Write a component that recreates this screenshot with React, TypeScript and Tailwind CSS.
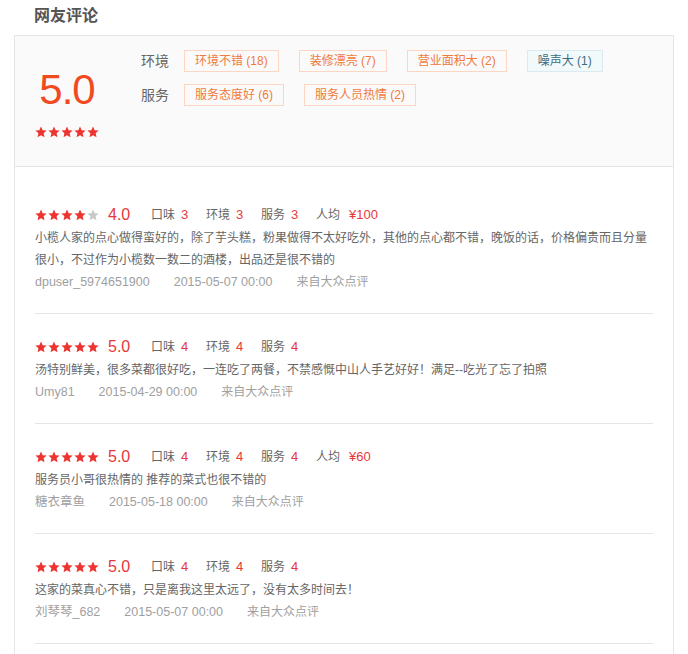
const FONT = "font-['Liberation_Sans','Noto_Sans_CJK_SC',sans-serif]";

type Review = {
    score: number;
    taste: number;
    env: number;
    service: number;
    price?: string;
    text: string;
    user: string;
    time: string;
};

const reviews: Review[] = [
    {
        score: 4,
        taste: 3,
        env: 3,
        service: 3,
        price: '¥100',
        text: '小榄人家的点心做得蛮好的，除了芋头糕，粉果做得不太好吃外，其他的点心都不错，晚饭的话，价格偏贵而且分量很小，不过作为小榄数一数二的酒楼，出品还是很不错的',
        user: 'dpuser_5974651900',
        time: '2015-05-07 00:00',
    },
    {
        score: 5,
        taste: 4,
        env: 4,
        service: 4,
        text: '汤特别鲜美，很多菜都很好吃，一连吃了两餐，不禁感慨中山人手艺好好！满足--吃光了忘了拍照',
        user: 'Umy81',
        time: '2015-04-29 00:00',
    },
    {
        score: 5,
        taste: 4,
        env: 4,
        service: 4,
        price: '¥60',
        text: '服务员小哥很热情的 推荐的菜式也很不错的',
        user: '糖衣章鱼',
        time: '2015-05-18 00:00',
    },
    {
        score: 5,
        taste: 4,
        env: 4,
        service: 4,
        text: '这家的菜真心不错，只是离我这里太远了，没有太多时间去！',
        user: '刘琴琴_682',
        time: '2015-05-07 00:00',
    },
];

const Star = ({ on }: { on: boolean }) => (
    <svg width="12" height="12" viewBox="0 0 24 24" className={on ? 'fill-[#ec3530]' : 'fill-[#c9c9c9]'}>
        <path d="M12 1.2l3.3 7.2 7.9.8-5.9 5.3 1.7 7.8L12 18.3l-6.9 4 1.7-7.8L.8 9.2l7.9-.8z" />
    </svg>
);

const Stars = ({ n }: { n: number }) => (
    <div className="flex gap-px">
        {[0, 1, 2, 3, 4].map(i => <Star key={i} on={i < n} />)}
    </div>
);

const Tag = ({ label, blue }: { label: string; blue?: boolean }) => (
    <span
        className={`h-[22px] px-[10px] flex items-center text-[12px] border ${blue
            ? 'bg-[#f2f9fb] border-[#d9ebf0] text-[#3b6d82]'
            : 'border-[#fbd6c3] text-[#f07a3c]'}`}
    >
        {label}
    </span>
);

const Sub = ({ label, value }: { label: string; value: number }) => (
    <span className="w-[55px] flex items-center">
        <span className="text-[#666]">{label}</span>
        <span className="ml-[6px] text-[13px] text-[#e8373a]">{value}</span>
    </span>
);

export default function App() {
    return (
        <div className={`${FONT} bg-white mx-[14px]`}>
            {/* Title */}
            <div className="h-[35px] pl-5 pb-[3px] flex items-center text-[16px] font-bold text-[#555]">
                网友评论
            </div>

            <div className="border border-[#e5e5e5]">
                {/* Summary */}
                <div className="h-[131px] bg-[#fafafa] border-b border-[#e5e5e5] px-5 flex">
                    <div className="w-[64px] flex flex-col items-center pt-[33px]">
                        <div className="text-[42px] leading-[42px] tracking-[-1px] text-[#f04a1e]">5.0</div>
                        <div className="mt-[15px]">
                            <Stars n={5} />
                        </div>
                    </div>
                    <div className="ml-[42px] pt-[14px] flex flex-col gap-[12px]">
                        <div className="flex items-center">
                            <span className="w-[43px] text-[14px] text-[#666]">环境</span>
                            <div className="flex gap-5">
                                <Tag label="环境不错 (18)" />
                                <Tag label="装修漂亮 (7)" />
                                <Tag label="营业面积大 (2)" />
                                <Tag label="噪声大 (1)" blue />
                            </div>
                        </div>
                        <div className="flex items-center">
                            <span className="w-[43px] text-[14px] text-[#666]">服务</span>
                            <div className="flex gap-5">
                                <Tag label="服务态度好 (6)" />
                                <Tag label="服务人员热情 (2)" />
                            </div>
                        </div>
                    </div>
                </div>

                {/* Reviews */}
                <div className="px-5 pt-[15px] pb-[40px]">
                    {reviews.map((r, i) => (
                        <div key={i} className="pt-5 pb-5 border-b border-[#e5e5e5]">
                            <div className="h-[25px] flex items-center text-[12px]">
                                <Stars n={r.score} />
                                <span className="ml-[9px] w-[43px] text-[16px] text-[#e8373a]">{r.score.toFixed(1)}</span>
                                <Sub label="口味" value={r.taste} />
                                <Sub label="环境" value={r.env} />
                                <Sub label="服务" value={r.service} />
                                {r.price && (
                                    <span className="flex items-center">
                                        <span className="text-[#666]">人均</span>
                                        <span className="ml-[9px] text-[13px] text-[#e8373a]">{r.price}</span>
                                    </span>
                                )}
                            </div>
                            <p className="text-[12px] leading-[22px] text-[#666]">{r.text}</p>
                            <div className="text-[12px] leading-[22px] text-[#a0a0a0] flex">
                                <span className="mr-[24px] text-[12.5px]">{r.user}</span>
                                <span className="mr-[24px] text-[12.5px]">{r.time}</span>
                                <span>来自大众点评</span>
                            </div>
                        </div>
                    ))}
                </div>
            </div>
        </div>
    );
}
